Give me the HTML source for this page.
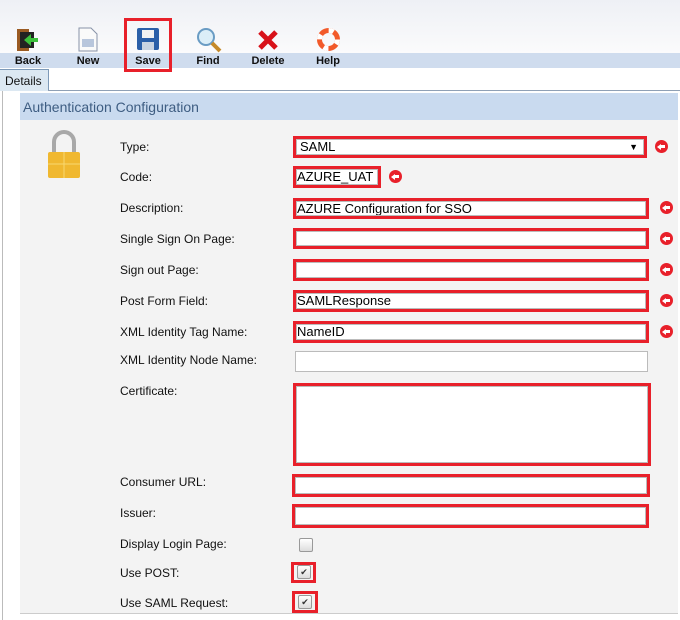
<!DOCTYPE html>
<html><head><style>
body{margin:0;width:680px;height:620px;overflow:hidden;background:#fff;font-family:"Liberation Sans",Arial,sans-serif;position:relative}
.a{position:absolute}
.lbl{position:absolute;left:120px;font-size:12px;color:#111}
.in{position:absolute;background:#fff;border:3px solid #e8202a;box-sizing:border-box;font-size:13px;color:#000;padding:0 2px;line-height:16px}
.in::after{content:"";position:absolute;inset:0;border:1px solid #bbb}
.arr{position:absolute;width:13px;height:13px;border-radius:50%;background:#e8202a}
.arr::before{content:"";position:absolute;left:2px;top:3.5px;border-top:3px solid transparent;border-bottom:3px solid transparent;border-right:4px solid #fff}
.arr::after{content:"";position:absolute;left:5px;top:5.3px;width:5px;height:2.5px;background:#fff}
.tb{position:absolute;top:55px;font-size:11px;font-weight:bold;color:#111;text-align:center;width:40px}
.cb{position:absolute;width:12px;height:12px;border:1px solid #999;border-radius:2px;background:linear-gradient(#fff,#ddd);font-size:9px;line-height:12px;text-align:center;color:#333}
</style></head><body>
<div class="a" style="left:0;top:0;width:680px;height:53px;background:linear-gradient(#eef0f5,#fbfbfc)"></div>
<div class="a" style="left:0;top:53px;width:680px;height:15px;background:#cfdcee"></div>
<svg class="a" style="left:16px;top:28px" width="26" height="24"><rect x="1" y="1" width="12" height="22" fill="#9a5a22"/><rect x="4" y="4" width="14" height="16" fill="#222"/><path d="M8 12 L15 6 V10 H22 V14 H15 V18 Z" fill="#3cc03c"/></svg>
<svg class="a" style="left:78px;top:27px" width="20" height="25"><path d="M1 1 H13 L19 7 V24 H1 Z" fill="#fafafa" stroke="#8893a8"/><rect x="4" y="12" width="12" height="8" fill="#b8c6dc"/></svg>
<svg class="a" style="left:137px;top:28px" width="22" height="22"><rect x="0" y="0" width="22" height="22" rx="2" fill="#2b5fa8"/><rect x="5" y="2" width="12" height="8" fill="#f2f2f2"/><rect x="5" y="14" width="12" height="8" fill="#c9d4e2"/></svg>
<svg class="a" style="left:196px;top:27px" width="26" height="26"><circle cx="10" cy="10" r="8" fill="#dbeef8" stroke="#6a9cc4" stroke-width="2"/><path d="M16 16 L24 24" stroke="#c58a2a" stroke-width="4"/></svg>
<svg class="a" style="left:257px;top:29px" width="22" height="22"><path d="M3 3 L19 19 M19 3 L3 19" stroke="#d8121a" stroke-width="5"/></svg>
<svg class="a" style="left:317px;top:28px" width="23" height="23"><circle cx="11.5" cy="11.5" r="9" fill="none" stroke="#f25a2a" stroke-width="5"/><circle cx="11.5" cy="11.5" r="9" fill="none" stroke="#fff" stroke-width="5" stroke-dasharray="5 9.1"/></svg>
<div class="tb" style="left:8px">Back</div>
<div class="tb" style="left:68px">New</div>
<div class="tb" style="left:128px">Save</div>
<div class="tb" style="left:188px">Find</div>
<div class="tb" style="left:248px">Delete</div>
<div class="tb" style="left:308px">Help</div>
<div class="a" style="left:124px;top:18px;width:48px;height:54px;border:3px solid #e8202a;box-sizing:border-box"></div>
<div class="a" style="left:0;top:69px;width:49px;height:22px;background:#dce8f2;border-right:1px solid #7e9ab8;border-top:1px solid #7e9ab8;font-size:12px;line-height:22px;padding-left:5px;box-sizing:border-box;color:#111">Details</div>
<div class="a" style="left:48px;top:90px;width:632px;height:1px;background:#8fa0b5"></div>
<div class="a" style="left:2px;top:91px;width:1px;height:529px;background:#bbb"></div>
<div class="a" style="left:20px;top:93px;width:658px;height:27px;background:#c9daef;font-size:14px;line-height:29px;padding-left:3px;color:#3e5d82;box-sizing:border-box">Authentication Configuration</div>
<div class="a" style="left:20px;top:120px;width:658px;height:493px;background:#f3f3f3;border-bottom:1px solid #ccc"></div>
<svg class="a" style="left:46px;top:130px" width="36" height="50"><path d="M8 22 V12 A10 10 0 0 1 28 12 V22" fill="none" stroke="#a8a8a8" stroke-width="4"/><rect x="2" y="22" width="32" height="26" rx="2" fill="#f0b830"/><path d="M2 34 H34 M18 22 V48" stroke="#f8d870" stroke-width="1"/></svg>
<div class="lbl" style="top:140px">Type:</div>
<div class="lbl" style="top:170px">Code:</div>
<div class="lbl" style="top:201px">Description:</div>
<div class="lbl" style="top:232px">Single Sign On Page:</div>
<div class="lbl" style="top:263px">Sign out Page:</div>
<div class="lbl" style="top:294px">Post Form Field:</div>
<div class="lbl" style="top:325px">XML Identity Tag Name:</div>
<div class="lbl" style="top:353px">XML Identity Node Name:</div>
<div class="lbl" style="top:384px">Certificate:</div>
<div class="lbl" style="top:475px">Consumer URL:</div>
<div class="lbl" style="top:506px">Issuer:</div>
<div class="lbl" style="top:537px">Display Login Page:</div>
<div class="lbl" style="top:566px">Use POST:</div>
<div class="lbl" style="top:596px">Use SAML Request:</div>

<div class="in" style="left:293px;top:136px;width:354px;height:22px;padding-left:4px">SAML<span style="position:absolute;right:6px;font-size:9px">▼</span></div>
<div class="in" style="left:293px;top:166px;width:88px;height:22px;padding:0 1px">AZURE_UAT</div>
<div class="in" style="left:293px;top:198px;width:356px;height:21px;padding:0 1px">AZURE Configuration for SSO</div>
<div class="in" style="left:293px;top:228px;width:356px;height:21px"></div>
<div class="in" style="left:293px;top:259px;width:356px;height:22px"></div>
<div class="in" style="left:293px;top:290px;width:356px;height:22px;padding:0 1px">SAMLResponse</div>
<div class="in" style="left:293px;top:321px;width:356px;height:22px;padding:0 1px">NameID</div>
<div class="a" style="left:295px;top:351px;width:353px;height:21px;background:#fff;border:1px solid #bbb;box-sizing:border-box"></div>
<div class="in" style="left:293px;top:383px;width:358px;height:83px"></div>
<div class="in" style="left:292px;top:474px;width:358px;height:23px"></div>
<div class="in" style="left:292px;top:504px;width:357px;height:24px"></div>
<div class="cb" style="left:299px;top:538px"></div>
<div class="a" style="left:291px;top:562px;width:25px;height:21px;border:3px solid #e8202a;box-sizing:border-box"></div>
<div class="cb" style="left:297px;top:565px">✔</div>
<div class="a" style="left:292px;top:591px;width:26px;height:22px;border:3px solid #e8202a;box-sizing:border-box"></div>
<div class="cb" style="left:298px;top:595px">✔</div>

<div class="arr" style="left:655px;top:140px"></div>
<div class="arr" style="left:389px;top:170px"></div>
<div class="arr" style="left:660px;top:201px"></div>
<div class="arr" style="left:660px;top:232px"></div>
<div class="arr" style="left:660px;top:263px"></div>
<div class="arr" style="left:660px;top:294px"></div>
<div class="arr" style="left:660px;top:325px"></div>
</body></html>
